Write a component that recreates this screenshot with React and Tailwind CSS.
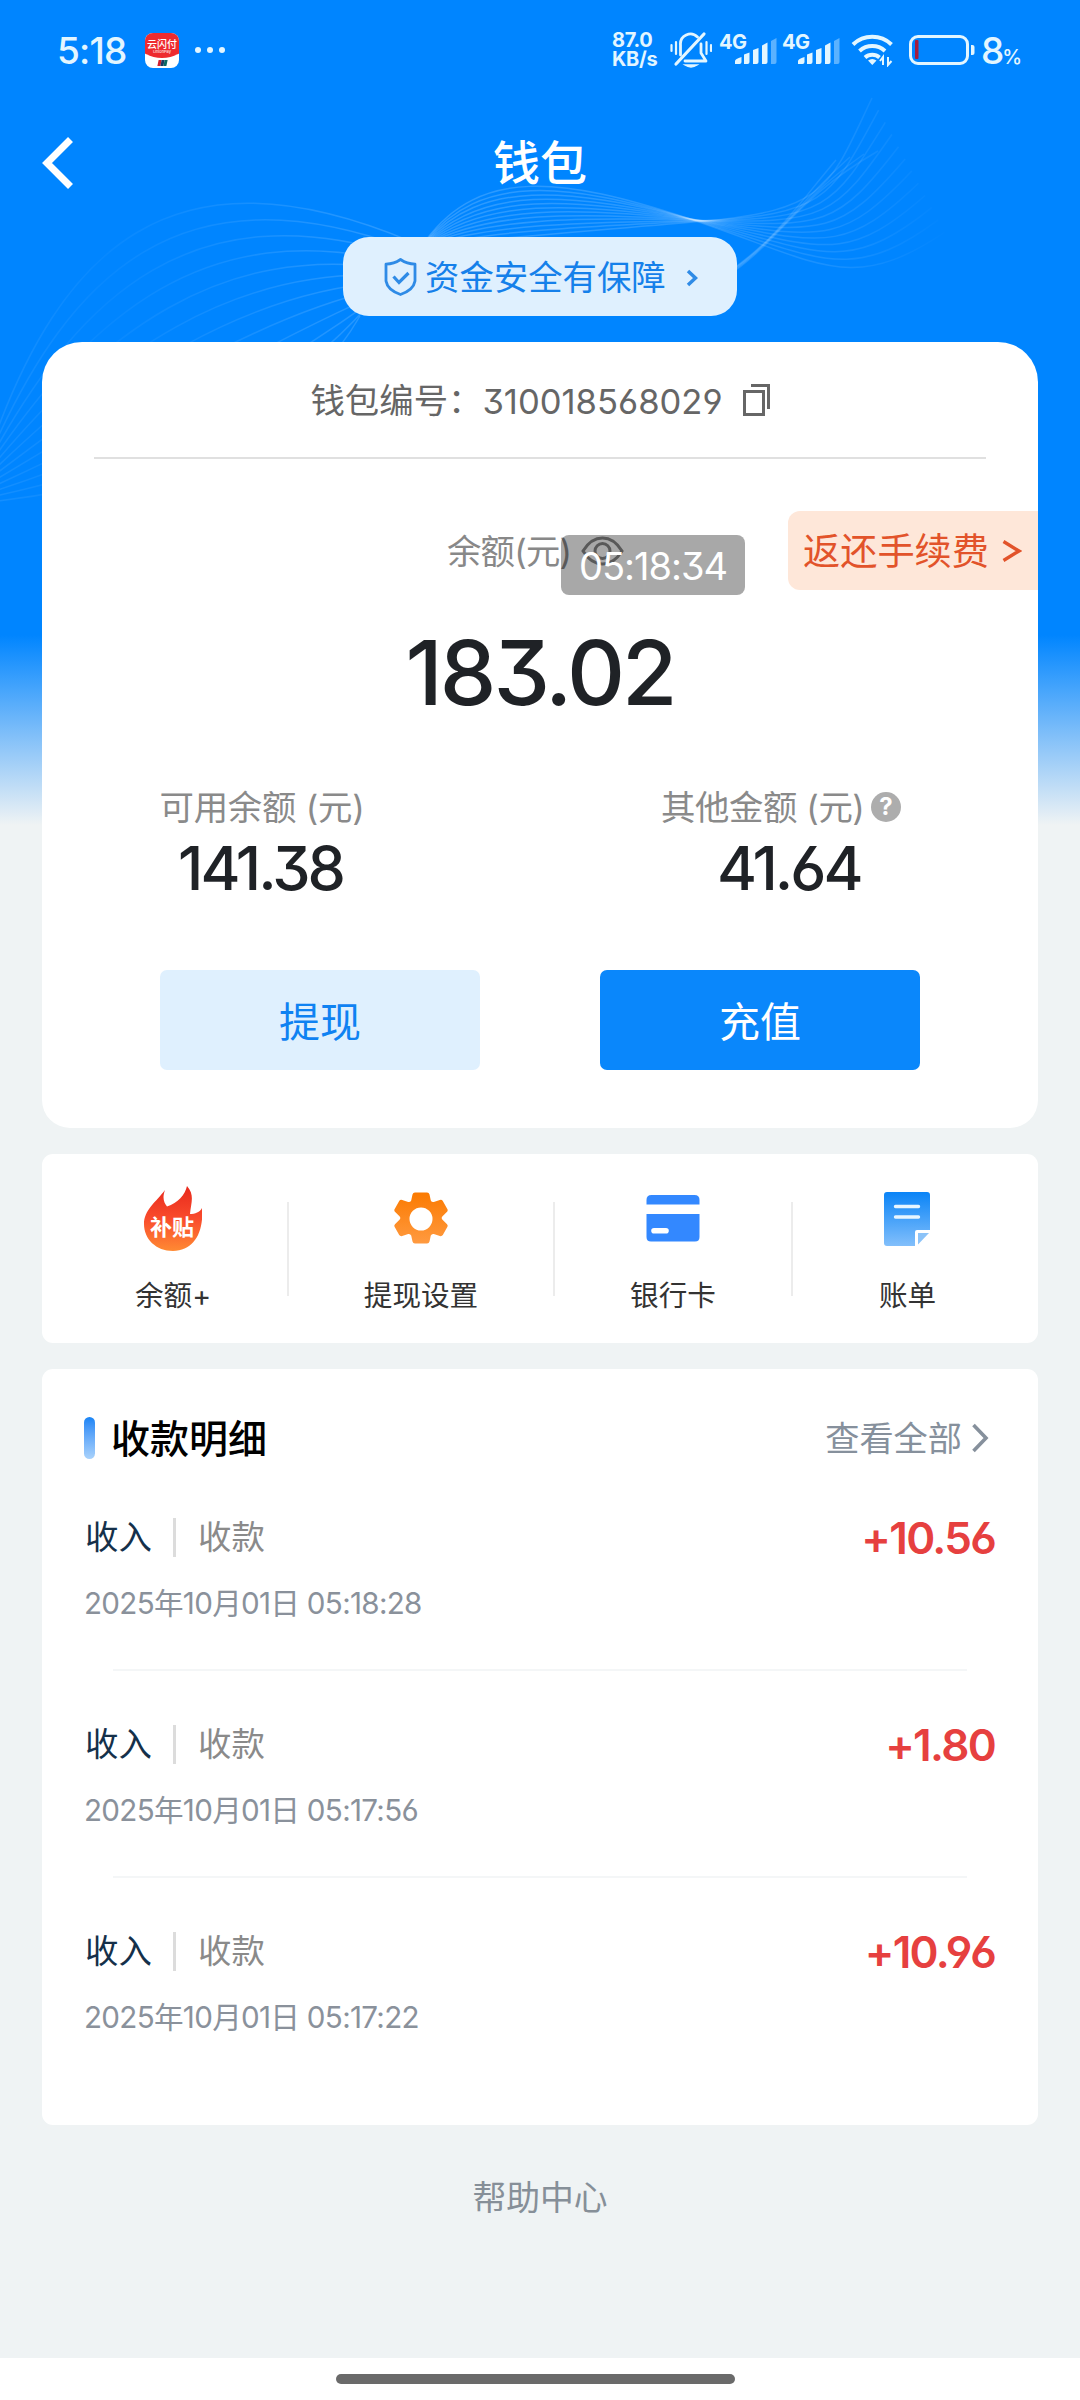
const records = [
  { id: 1, amount: "+10.56", date: "2025年10月01日 05:18:28" },
  { id: 2, amount: "+1.80", date: "2025年10月01日 05:17:56" },
  { id: 3, amount: "+10.96", date: "2025年10月01日 05:17:22" },
];

const steps = [0, 1, 2, 3, 4, 5, 6, 7, 8, 9, 10, 11];

function Waves() {
  return (
    <svg
      className="absolute left-0 top-0"
      width="1080"
      height="560"
      viewBox="0 0 1080 560"
      fill="none"
    >
      <defs>
        <linearGradient id="waveLeft" gradientUnits="userSpaceOnUse" x1="0" y1="0" x2="420" y2="0">
          <stop offset="0" stopColor="#fff" stopOpacity="0.08" />
          <stop offset="0.25" stopColor="#fff" stopOpacity="0.03" />
          <stop offset="0.6" stopColor="#fff" stopOpacity="0.09" />
          <stop offset="1" stopColor="#fff" stopOpacity="0.18" />
        </linearGradient>
        <linearGradient id="waveRight" gradientUnits="userSpaceOnUse" x1="420" y1="0" x2="950" y2="0">
          <stop offset="0" stopColor="#fff" stopOpacity="0.18" />
          <stop offset="0.5" stopColor="#fff" stopOpacity="0.15" />
          <stop offset="0.8" stopColor="#fff" stopOpacity="0.09" />
          <stop offset="1" stopColor="#fff" stopOpacity="0" />
        </linearGradient>
      </defs>
      {steps.map((i) => {
        const t = i / 11;
        return (
          <path
            key={i}
            stroke="url(#waveLeft)"
            strokeWidth="1.5"
            d={`M-10 ${450 + 52 * t} C${60 + 120 * t} ${250 + 230 * t} ${170 + 130 * t} ${140 + 280 * t} ${
              412 - 52 * t
            } ${242 + 74 * t}`}
          />
        );
      })}
      {steps.map((i) => {
        const t = i / 11;
        return (
          <path
            key={i}
            stroke="url(#waveRight)"
            strokeWidth="1.5"
            d={`M${426 + 4 * t} ${240 + 6 * t} C${480 + 10 * t} ${168 + 70 * t} ${560 + 20 * t} ${
              176 + 56 * t
            } ${690 + 14 * t} ${219 + 2 * t} S${850 - 20 * t} ${296 - 110 * t} ${945 - 73 * t} ${232 - 134 * t}`}
          />
        );
      })}
      {steps.slice(0, 4).map((i) => (
        <path
          key={i}
          stroke="url(#waveRight)"
          strokeWidth="1.5"
          d={`M${700 + i * 8} ${290 - i * 4} C${770 + i * 4} ${250 - i * 3} 790 ${214 - i * 4} ${836 + i * 14} ${
            160 - i * 3
          }`}
        />
      ))}
    </svg>
  );
}

function SignalBars() {
  return (
    <svg width="42" height="28" viewBox="0 0 42 28" fill="#e3f6ff">
      <path d="M0 27v-3q0-2 6.500-4v5q0 2-2 2z" />
      <path d="M9 17.500l5.500-2V25q0 2-2 2H9z" />
      <path d="M18 13l5.500-2V25q0 2-2 2H18z" />
      <path d="M27 8.500l5.500-3V25q0 2-2 2H27z" />
      <path d="M36 4l5.500-3V25q0 2-2 2H36z" opacity=".4" />
    </svg>
  );
}

function StatusBar() {
  return (
    <div className="flex h-[100px] items-center text-[#e3f6ff]">
      <span className="ml-[57px] w-[88px] text-[37px] font-medium leading-none tracking-[-0.8px]">5:18</span>
      <div className="flex h-[35px] w-[34px] flex-col items-center overflow-hidden rounded-[8px] bg-white">
        <div className="flex h-[25px] w-[44px] flex-col items-center rounded-b-[50%] bg-[#ee2b2f] pt-[6px] text-white">
          <span className="text-[10px] font-medium leading-[10px]">云闪付</span>
          <span className="text-[4px] leading-[5px]">UnionPay</span>
        </div>
        <div className="mt-[2px] flex h-[6px] -skew-x-12">
          <span className="w-[3px] bg-[#d3202f]" />
          <span className="w-[3px] bg-[#1d3b63]" />
          <span className="w-[3px] bg-[#0d6a63]" />
        </div>
      </div>
      <div className="ml-[16px] flex gap-[6px]">
        <span className="size-[6px] rounded-full bg-[#e3f6ff]" />
        <span className="size-[6px] rounded-full bg-[#e3f6ff]" />
        <span className="size-[6px] rounded-full bg-[#e3f6ff]" />
      </div>
      <div className="ml-auto flex w-[58px] flex-col text-[20px] font-bold leading-[19px] tracking-[-0.3px]">
        <span>87.0</span>
        <span>KB/s</span>
      </div>
      <svg width="42" height="38" viewBox="0 0 42 38" fill="none" stroke="#e3f6ff" strokeWidth="2.800" strokeLinecap="round">
        <path d="M34 3L6 33" strokeWidth="3.200" />
        <path d="M10.500 24V14a10 10 0 0 1 17-8" />
        <path d="M31 13v9l5 8H15" strokeLinejoin="round" />
        <path d="M15 34q6 4 12 0z" fill="#e3f6ff" strokeWidth="1.500" />
        <path d="M1.500 14v6M6 11v12M36.500 11v12M41 14v6" strokeWidth="2.200" />
      </svg>
      <div className="ml-[7px] flex h-[36px] w-[57px] items-start">
        <span className="w-[16px] text-[20px] font-bold leading-[20px] tracking-[-0.5px]">4G</span>
        <div className="pt-[5px]">
          <SignalBars />
        </div>
      </div>
      <div className="ml-[6px] flex h-[36px] w-[57px] items-start">
        <span className="w-[16px] text-[20px] font-bold leading-[20px] tracking-[-0.5px]">4G</span>
        <div className="pt-[5px]">
          <SignalBars />
        </div>
      </div>
      <svg className="ml-[12px]" width="44" height="34" viewBox="0 0 44 34" fill="none" stroke="#e3f6ff" strokeWidth="4">
        <path d="M2 11.500a28 28 0 0 1 38.500 0" />
        <path d="M8.500 18a19 19 0 0 1 25.500 0" />
        <path d="M14 24.500a11 11 0 0 1 14.500 0" />
        <path d="M17 27.500q4.300-3 8.500 0L21.300 32z" fill="#e3f6ff" stroke="none" />
        <path d="M32 32v-8l-3 4M37 24v8l3.500-4M37 24v8" strokeWidth="2" />
      </svg>
      <svg className="ml-[14px]" width="66" height="30" viewBox="0 0 66 30" fill="none">
        <rect x="1.500" y="1.500" width="57" height="27" rx="7.500" stroke="#e3f6ff" strokeWidth="3" />
        <rect x="6" y="5" width="3.500" height="19" rx="1" fill="#a51d3c" />
        <path d="M62 10h1.500q2 0 2 2v6q0 2-2 2H62z" fill="#e3f6ff" />
      </svg>
      <div className="ml-[6px] mr-[57px] flex w-[42px] items-baseline">
        <span className="text-[37px] font-medium leading-none tracking-[-2px]">8</span>
        <span className="text-[20px] font-medium leading-none">%</span>
      </div>
    </div>
  );
}

function Header() {
  return (
    <>
      <div className="grid h-[125px] grid-cols-3 items-center">
        <svg className="ml-[42px]" width="32" height="52" viewBox="0 0 32 52" fill="none">
          <path d="M28.500 2.500L5 26l23.500 23.500" stroke="#fff" strokeWidth="7" />
        </svg>
        <h1 className="text-center text-[47px] font-medium leading-none text-white">钱包</h1>
      </div>
      <div className="mx-auto mt-[12px] flex h-[79px] w-[394px] items-center rounded-[26px] bg-[#dff0fe] pl-[41px] text-[#1580ea]">
        <svg width="33" height="38" viewBox="0 0 33 38" fill="none" stroke="#2f8be6" strokeWidth="2.800">
          <path d="M16.500 1.500Q23 6 31 6.200V23q-1.500 9-14.500 13.500Q3.500 32 2 23V6.200Q10 6 16.500 1.500z" strokeLinejoin="round" />
          <path d="M9.500 18.500l5.500 6 9.500-9.500" strokeWidth="3.200" />
        </svg>
        <span className="ml-[8px] pt-[3px] text-[34.4px] leading-none">资金安全有保障</span>
        <svg className="ml-[20px] mt-[3px]" width="12" height="18" viewBox="0 0 12 18" fill="none">
          <path d="M2 2l7.500 7L2 16" stroke="#2f8be6" strokeWidth="3.500" />
        </svg>
      </div>
    </>
  );
}

function BalanceCard() {
  return (
    <section className="relative mx-[42px] mt-[26px] flex h-[786px] flex-col rounded-b-[28px] rounded-t-[40px] bg-white">
      <div className="mx-[52px] flex h-[117px] items-center justify-center border-b-2 border-[#e0e0e0] pt-[3px] text-[34.4px] leading-none text-[#666]">
        <span>钱包编号：</span>
        <span className="text-[34.6px]">310018568029</span>
        <svg className="mb-[3px] ml-[20px]" width="27" height="32" viewBox="0 0 27 32" fill="none" stroke="#666" strokeWidth="3">
          <rect x="1.500" y="7.500" width="19" height="23" />
          <path d="M8 1.500h17.500V25" />
        </svg>
      </div>

      <div className="mt-[52px] flex h-[79px] items-center">
        <div className="ml-[405px] flex items-center text-[34.4px] leading-none text-[#888]">
          <span className="w-[122px] whitespace-nowrap pt-[3px] tracking-[-0.8px]">余额(元)</span>
          <svg className="ml-[12px]" width="43" height="32" viewBox="0 0 43 32" fill="none" stroke="#888" strokeWidth="3">
            <path d="M2 16Q10 3 21.500 3T41 16Q33 29 21.500 29T2 16z" />
            <circle cx="21.500" cy="16" r="7.500" />
          </svg>
        </div>
        <div className="ml-auto flex h-full w-[250px] items-center rounded-l-[12px] bg-[#fee7d9] pl-[15px] text-[37.200px] leading-none text-[#e2532a]">
          <span className="pt-[2px]">返还手续费</span>
          <svg className="ml-[13px]" width="20" height="24" viewBox="0 0 20 24" fill="none">
            <path d="M1.500 2.500L17 12 1.500 21.500" stroke="#e2532a" strokeWidth="3.400" />
          </svg>
        </div>
      </div>

      <div className="mt-[34px] flex h-[98px] items-center justify-center text-[90px] font-medium leading-none tracking-[-3px] text-[#1f2226]">
        183.02
      </div>

      <div className="mt-[62px] flex">
        <div className="flex w-[440px] flex-col items-center">
          <p className="h-[46px] whitespace-nowrap text-[34.4px] leading-[48px] tracking-[-0.2px] text-[#8a8a8a]">可用余额 (元)</p>
          <p className="h-[76px] pr-[3px] text-[61px] font-medium leading-[76px] tracking-[-3px] text-[#1f2226]">141.38</p>
        </div>
        <div className="ml-[179px] flex w-[257px] flex-col">
          <p className="flex h-[46px] items-center whitespace-nowrap text-[34.4px] leading-[46px] text-[#8a8a8a]">
            <span className="w-[210px] pt-[2px] tracking-[-0.4px]">其他金额 (元)</span>
            <span className="flex size-[30px] items-center justify-center rounded-full bg-[#adadad] text-[24px] font-bold leading-none text-white">
              ?
            </span>
          </p>
          <p className="ml-[56px] h-[76px] text-[61px] font-medium leading-[76px] tracking-[-3px] text-[#1f2226]">41.64</p>
        </div>
      </div>

      <div className="mt-[64px] flex gap-[120px] px-[118px]">
        <button className="h-[100px] w-[320px] rounded-[7px] bg-[#dff0fe] pt-[4px] text-[41px] leading-none text-[#0f82f2]">提现</button>
        <button className="h-[100px] w-[320px] rounded-[7px] bg-[#0a87fb] pt-[4px] text-[41px] leading-none text-white">充值</button>
      </div>

      {/* clock toast */}
      <div className="absolute left-[519px] top-[193px] flex h-[60px] w-[184px] items-center justify-center rounded-[8px] bg-black/34 pt-[2px] text-[38px] leading-none tracking-[-1px] text-white">
        05:18:34
      </div>
    </section>
  );
}

function FlameIcon() {
  return (
    <div className="relative h-[66px] w-[58px]">
      <svg width="58" height="66" viewBox="0 0 58 66">
        <defs>
          <linearGradient id="flame" x1="0" y1="0" x2="0" y2="1">
            <stop offset="0" stopColor="#e8291c" />
            <stop offset="0.500" stopColor="#f94b2c" />
            <stop offset="1" stopColor="#ff8a33" />
          </linearGradient>
        </defs>
        <path
          fill="url(#flame)"
          d="M21 4C18 12 20 17 23 20.500C34 17 41 9 43 0C51 9 47 17 46 28C51 28 56 26 58 22C60 46 50 65 29 65C12 65 0 53 0 38C0 24 12 16 21 4z"
        />
      </svg>
      <span className="absolute left-[6px] top-[29px] whitespace-nowrap text-[22px] font-bold leading-[24px] text-white">
        补贴
      </span>
    </div>
  );
}

function GearIcon() {
  return (
    <svg width="54" height="54" viewBox="0 0 54 54">
      <defs>
        <linearGradient id="gear" x1="0" y1="0" x2="0" y2="1">
          <stop offset="0" stopColor="#fb7a00" />
          <stop offset="1" stopColor="#ff9a40" />
        </linearGradient>
      </defs>
      <path
        fill="url(#gear)"
        fillRule="evenodd"
        d="M21 0.500h12q2 0 2.500 2l1.300 6q1 2 3 1.500l6-2q2-.6 3 1l4.500 8q1 1.500-.5 3l-4.500 4.500q-1.200 1.500 0 3l4.500 4.500q1.500 1.500.5 3l-4.500 8q-1 1.500-3 1l-6-2q-2-.5-3 1.500l-1.300 6q-.5 2-2.500 2H21q-2 0-2.500-2l-1.300-6q-1-2-3-1.500l-6 2q-2 .5-3-1l-4.500-8q-1-1.500.5-3l4.500-4.500q1.200-1.500 0-3l-4.500-4.500q-1.500-1.500-.5-3l4.500-8q1-1.600 3-1l6 2q2 .5 3-1.500l1.300-6q.5-2 2.500-2zM27 15.500a11.500 11.500 0 1 0 0 23a11.500 11.500 0 1 0 0-23z"
      />
    </svg>
  );
}

function BankCardIcon() {
  return (
    <svg width="54" height="47" viewBox="0 0 54 47" fill="#3388ff">
      <path d="M0.500 9.500V5q0-5 5-5h43q5 0 5 5v4.500z" />
      <path
        fillRule="evenodd"
        d="M0.500 19h53v23q0 4.500-4.500 4.500H5q-4.500 0-4.500-4.500zM8 33a2.800 2.800 0 0 0 0 5.600h12a2.800 2.800 0 0 0 0-5.600z"
      />
    </svg>
  );
}

function BillIcon() {
  return (
    <svg width="46" height="54" viewBox="0 0 46 54">
      <defs>
        <linearGradient id="bill" x1="0" y1="0" x2="0" y2="1">
          <stop offset="0" stopColor="#0a84f7" />
          <stop offset="1" stopColor="#82bffb" />
        </linearGradient>
      </defs>
      <path fill="url(#bill)" d="M3 0h40q3 0 3 3v35H33q-2 0-2 2v14H3q-3 0-3-3V3q0-3 3-3z" />
      <path fill="#8cc3f8" d="M34 41h11L34 52.500z" />
      <path d="M11.500 14.500h23M11.500 25h23" stroke="#e8f6ff" strokeWidth="3.400" strokeLinecap="round" />
    </svg>
  );
}

function Entry({ icon, label }) {
  return (
    <div className="flex flex-col items-center">
      <div className="flex h-[70px] items-center pt-[5px]">{icon}</div>
      <span className="mt-[25px] text-[28.6px] leading-[40px] text-[#333]">{label}</span>
    </div>
  );
}

function EntryCard() {
  return (
    <section className="mx-[42px] mt-[26px] flex h-[189px] items-center rounded-[11px] bg-white">
      <div className="flex w-[245px] justify-center pl-[17px]">
        <Entry icon={<FlameIcon />} label="余额+" />
      </div>
      <span className="h-[94px] w-[2px] bg-[#ececec]" />
      <div className="flex w-[264px] justify-center">
        <Entry icon={<GearIcon />} label="提现设置" />
      </div>
      <span className="h-[94px] w-[2px] bg-[#ececec]" />
      <div className="flex w-[236px] justify-center">
        <Entry icon={<BankCardIcon />} label="银行卡" />
      </div>
      <span className="h-[94px] w-[2px] bg-[#ececec]" />
      <div className="flex flex-1 justify-center pr-[16px]">
        <Entry icon={<BillIcon />} label="账单" />
      </div>
    </section>
  );
}

function RecordCard() {
  return (
    <section className="mx-[42px] mt-[26px] h-[756px] rounded-[11px] bg-white px-[42px]">
      <div className="flex h-[138px] items-center">
        <span className="h-[42px] w-[11px] rounded-full bg-linear-to-b from-[#1584f5] to-[#a9d2fb]" />
        <h2 className="ml-[16px] pt-[1px] text-[39px] font-medium leading-none text-black">收款明细</h2>
        <span className="ml-auto pt-[2px] text-[34.2px] leading-none text-[#86909c]">查看全部</span>
        <svg className="ml-[10px] mr-[7px]" width="17" height="30" viewBox="0 0 17 30" fill="none">
          <path d="M1.500 2l12.500 13L1.500 28" stroke="#86909c" strokeWidth="3.600" />
        </svg>
      </div>
      {records.map((item, index) => (
        <div key={item.id} className="h-[207px]">
          <div className="flex h-[60px] items-center text-[33.4px] leading-none">
            <span className="w-[68px] pl-[1px] pt-[2px] text-[#15304a]">收入</span>
            <span className="ml-[21px] h-[39px] w-[3px] bg-[#dcdcdc]" />
            <span className="ml-[22px] pt-[2px] text-[#8a8a8a]">收款</span>
            <span className="ml-auto pr-[1px] pt-[1px] text-[44px] font-semibold tracking-[-1.7px] text-[#e6403f]">{item.amount}</span>
          </div>
          <p className="mt-[14px] text-[29.6px] leading-[44px] tracking-[-0.7px] text-[#8a919b]">{item.date}</p>
          {index < records.length - 1 && <div className="mx-[29px] mt-[44px] h-[2px] bg-[#f4f6f7]" />}
        </div>
      ))}
    </section>
  );
}

export default function App() {
  return (
    <div className="relative flex h-[2400px] w-[1080px] flex-col overflow-hidden bg-[#eff3f4] bg-[linear-gradient(to_bottom,#0085ff_0px,#0085ff_635px,#80bff9_735px,#eff3f4_825px)] font-['Inter','Noto_Sans_CJK_SC',sans-serif] [font-feature-settings:'cv09','cv03','cv04']">
      <Waves />
      <div className="relative flex-1">
        <StatusBar />
        <Header />
        <BalanceCard />
        <EntryCard />
        <RecordCard />
        <p className="mt-[48px] text-center text-[33.8px] leading-[50px] text-[#868f98]">帮助中心</p>
      </div>
      <div className="flex h-[42px] items-center justify-center bg-white pr-[9px]">
        <span className="h-[10px] w-[399px] rounded-full bg-[#6a6a6a]" />
      </div>
    </div>
  );
}
